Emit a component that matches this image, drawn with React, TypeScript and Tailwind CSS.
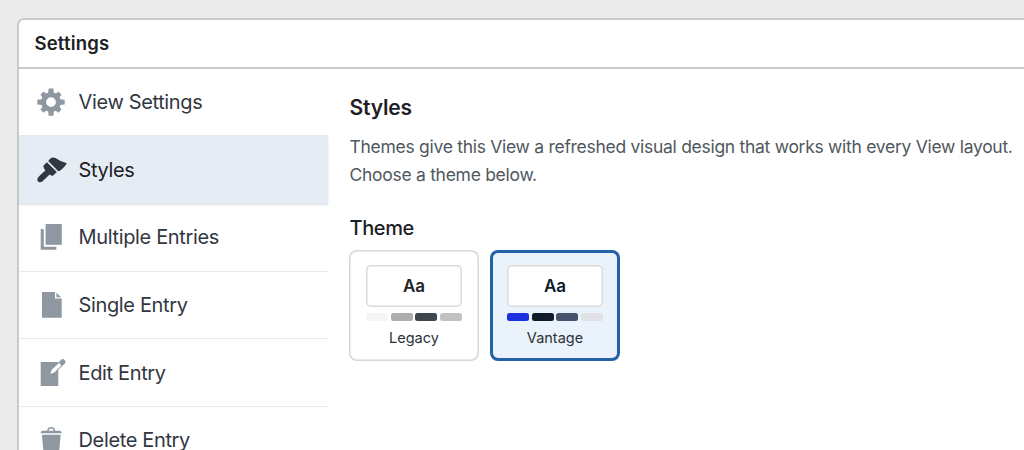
import React, { useState } from "react";

const GearIcon = () => (
  <svg width="30" height="28" viewBox="0 0 30 28" className="shrink-0 text-[#8f98a1]">
    <circle cx="14" cy="14.1" r="7.4" fill="none" stroke="currentColor" strokeWidth="5" />
    {[0, 90, 180, 270].map((angle) => (
      <path key={angle} d="M11.6 0.4h4.8l.5 5.2h-5.8z" fill="currentColor" transform={`rotate(${angle} 14 14.1)`} />
    ))}
    {[45, 135, 225, 315].map((angle) => (
      <path key={angle} d="M11.8 1.4h4.4l.5 4.4h-5.4z" fill="currentColor" transform={`rotate(${angle} 14 14.1)`} />
    ))}
  </svg>
);

const BrushIcon = () => (
  <svg width="30" height="28" viewBox="0 0 30 28" fill="currentColor" className="shrink-0 text-[#32373f]">
    <path d="M10 6.2 L19.8 15.9 L16.2 19.6 Q15 20.4 12.6 18.6 L5.6 25.2 Q3.6 27 1.6 25.9 Q-0.6 24.2 0.9 21.8 Q1.8 20.3 8.4 14.6 Q5.6 11 6.7 9.3 Z" />
    <path d="M11.2 5 L13.4 2.4 Q15.6 0.8 18.4 2.1 Q23.5 5.8 29.9 7.2 Q28 10.8 22.6 15 L21 15 Z" />
  </svg>
);

const PagesIcon = () => (
  <svg width="30" height="28" viewBox="0 0 30 28" fill="currentColor" className="shrink-0 text-[#8f98a1]">
    <path d="M8.6 1h16.2v20.8H8.6z" />
    <path d="M3.7 6h3.1v17.7h12.6v3H3.7z" />
  </svg>
);

const PageIcon = () => (
  <svg width="30" height="28" viewBox="0 0 30 28" fill="currentColor" className="shrink-0 text-[#8f98a1]">
    <path d="M5 1.1h13v6.4h6.7v19.2H5z" />
    <path d="M19.4 1.8l4.8 4.5h-4.8z" />
  </svg>
);

const EditIcon = () => (
  <svg width="30" height="28" viewBox="0 0 30 28" fill="currentColor" className="shrink-0 text-[#8f98a1]">
    <path d="M3.7 3h17.6v24H3.7z" />
    <path d="M19.5 9l6.3-6.2" stroke="currentColor" strokeWidth="5.2" strokeLinecap="round" />
    <path d="M13.3 15l1.4-4.2 7.3-6.9 2.4 2.5-7.1 7z" fill="white" />
  </svg>
);

const TrashIcon = () => (
  <svg width="30" height="28" viewBox="0 0 30 28" fill="currentColor" className="shrink-0 text-[#8f98a1]">
    <path d="M10.9 5.2Q11 1.8 14.2 1.8T17.5 5.2" fill="none" stroke="currentColor" strokeWidth="1.5" />
    <path d="M5.4 4.7h17.4q1.8 0 2 2.5H3.6q.1-2.5 1.8-2.5z" />
    <path d="M4.9 8.7h18.8L22 27H6.6z" />
  </svg>
);

const menu = [
  { id: "view", label: "View Settings", icon: <GearIcon /> },
  { id: "styles", label: "Styles", icon: <BrushIcon /> },
  { id: "multiple", label: "Multiple Entries", icon: <PagesIcon /> },
  { id: "single", label: "Single Entry", icon: <PageIcon /> },
  { id: "edit", label: "Edit Entry", icon: <EditIcon /> },
  { id: "delete", label: "Delete Entry", icon: <TrashIcon /> },
];

const themes = [
  {
    id: "legacy",
    label: "Legacy",
    text: "text-[#212427]",
    swatches: ["bg-[#f4f6f6]", "bg-[#adadad]", "bg-[#40464e]", "bg-[#c1c1c1]"],
  },
  {
    id: "vantage",
    label: "Vantage",
    text: "text-[#0f1b2b]",
    swatches: ["bg-[#1b31df]", "bg-[#0f1b2b]", "bg-[#45546a]", "bg-[#dfe1e6]"],
  },
];

export default function App() {
  const [section, setSection] = useState("styles");
  const [theme, setTheme] = useState("vantage");

  return (
    <div className="h-[450px] overflow-hidden bg-[#ebebeb] pl-[17px] pt-[17.5px] font-['Inter',sans-serif]">
      <div className="h-[500px] w-[1040px] rounded-tl-[7px] border-2 border-[#c8cacc] bg-white">
        {/* Header */}
        <header className="flex h-[49px] items-center border-b-2 border-[#c8cacc] pl-[15.5px]">
          <h1 className="pt-[2px] text-[18.5px] font-semibold tracking-[0.2px] text-[#1d2125]">Settings</h1>
        </header>

        <div className="flex">
          {/* Sidebar */}
          <nav className="w-[309px] shrink-0">
            {menu.map((item) => (
              <button
                key={item.id}
                onClick={() => setSection(item.id)}
                className={`flex h-[67.7px] w-full items-center gap-[11.5px] border-b pl-[18px] text-left text-[20px] tracking-[-0.35px] ${
                  section === item.id
                    ? "border-[#dde6ef] bg-[#e5ecf4] text-[#1d2125] shadow-[0_1px_2px_rgba(0,0,0,0.12)]"
                    : "border-[#e3eaf2] text-[#32373f]"
                }`}
              >
                {item.icon}
                <span>{item.label}</span>
              </button>
            ))}
          </nav>

          {/* Styles panel */}
          <main className="pl-[21.5px] pt-6">
            <h2 className="text-[21px] font-semibold leading-[30px] tracking-[-0.15px] text-[#1d2125]">Styles</h2>
            <p className="mt-[10px] whitespace-nowrap text-[17.5px] leading-7 tracking-[-0.285px] text-[#50575e]">
              Themes give this View a refreshed visual design that works with every View layout.
              <br />
              Choose a theme below.
            </p>
            <h3 className="mt-[24px] text-[20px] font-medium leading-[30px] tracking-[-0.4px] text-[#1d2125]">Theme</h3>
            <div className="-ml-[0.5px] mt-[7px] flex gap-[11px]">
              {themes.map((t) => (
                <button
                  key={t.id}
                  onClick={() => setTheme(t.id)}
                  className={`flex h-[111px] w-[130px] flex-col items-center rounded-[8px] pt-[15px] ${
                    theme === t.id
                      ? "bg-[#eaf2fb] shadow-[inset_0_0_0_3px_#2461a6]"
                      : "bg-white shadow-[inset_0_0_0_1.5px_#d6d7d9]"
                  }`}
                >
                  <span
                    className={`flex h-[42px] w-24 items-center justify-center rounded-[5px] bg-white pt-[3px] text-[17px] font-semibold shadow-[inset_0_0_0_1.5px_#dadada] ${t.text}`}
                  >
                    Aa
                  </span>
                  <span className="mt-[6px] flex w-24 gap-[2.5px]">
                    {t.swatches.map((swatch) => (
                      <span key={swatch} className={`h-[8px] flex-1 rounded-[2.5px] ${swatch}`} />
                    ))}
                  </span>
                  <span className="mt-[6px] text-[14.5px] leading-[22px] text-[#2c3338]">{t.label}</span>
                </button>
              ))}
            </div>
          </main>
        </div>
      </div>
    </div>
  );
}
